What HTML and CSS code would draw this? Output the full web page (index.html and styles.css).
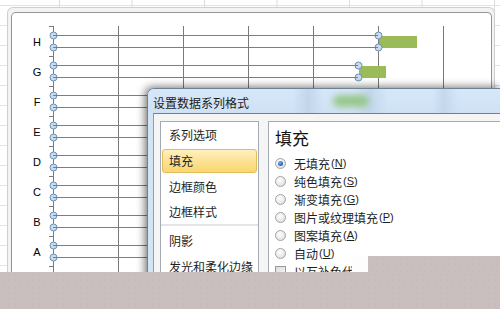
FILE: index.html
```html
<!DOCTYPE html>
<html>
<head>
<meta charset="utf-8">
<link rel="stylesheet" href="styles.css">
</head>
<body>
<div class="sheet">
  <div class="chart-frame">
    <div class="chart-area">
      <svg class="plot" width="479" height="270" viewBox="12 13 479 270" xmlns="http://www.w3.org/2000/svg">
        <g class="grid" stroke="#7a7a7a" stroke-width="1">
          <line x1="118.5" y1="26" x2="118.5" y2="283"/>
          <line x1="183.5" y1="26" x2="183.5" y2="283"/>
          <line x1="248.5" y1="26" x2="248.5" y2="283"/>
          <line x1="313.5" y1="26" x2="313.5" y2="283"/>
          <line x1="378.5" y1="26" x2="378.5" y2="283"/>
          <line x1="443.5" y1="26" x2="443.5" y2="283"/>
        </g>
        <g fill="#9bbb59">
          <rect x="379" y="36" width="38" height="12"/>
          <rect x="359" y="66" width="27" height="12"/>
          <rect x="331" y="96" width="40" height="12"/>
        </g>
        <g class="axis" stroke="#7a7a7a" stroke-width="1">
          <line x1="53.5" y1="26" x2="53.5" y2="283"/>
          <line x1="49" y1="26.5" x2="53" y2="26.5"/>
          <line x1="49" y1="56.5" x2="53" y2="56.5"/>
          <line x1="49" y1="86.5" x2="53" y2="86.5"/>
          <line x1="49" y1="116.5" x2="53" y2="116.5"/>
          <line x1="49" y1="146.5" x2="53" y2="146.5"/>
          <line x1="49" y1="176.5" x2="53" y2="176.5"/>
          <line x1="49" y1="206.5" x2="53" y2="206.5"/>
          <line x1="49" y1="236.5" x2="53" y2="236.5"/>
          <line x1="49" y1="266.5" x2="53" y2="266.5"/>
        </g>
        <g class="markers" fill="#c9dcee" stroke="#6d90b3" stroke-width="1">
          <circle cx="53.5" cy="35.5" r="3.5"/><circle cx="53.5" cy="47.5" r="3.5"/>
          <circle cx="378.5" cy="35.5" r="3.5"/><circle cx="378.5" cy="47.5" r="3.5"/>
          <circle cx="53.5" cy="65.5" r="3.5"/><circle cx="53.5" cy="77.5" r="3.5"/>
          <circle cx="358.5" cy="65.5" r="3.5"/><circle cx="358.5" cy="77.5" r="3.5"/>
          <circle cx="53.5" cy="95.5" r="3.5"/><circle cx="53.5" cy="107.5" r="3.5"/>
          <circle cx="53.5" cy="125.5" r="3.5"/><circle cx="53.5" cy="137.5" r="3.5"/>
          <circle cx="53.5" cy="155.5" r="3.5"/><circle cx="53.5" cy="167.5" r="3.5"/>
          <circle cx="53.5" cy="185.5" r="3.5"/><circle cx="53.5" cy="197.5" r="3.5"/>
          <circle cx="53.5" cy="215.5" r="3.5"/><circle cx="53.5" cy="227.5" r="3.5"/>
          <circle cx="53.5" cy="245.5" r="3.5"/><circle cx="53.5" cy="257.5" r="3.5"/>
        </g>
        <g class="bars" stroke="#7d7d7d" stroke-width="1">
          <line x1="53" y1="35.5" x2="378" y2="35.5"/><line x1="53" y1="47.5" x2="378" y2="47.5"/>
          <line x1="53" y1="65.5" x2="358" y2="65.5"/><line x1="53" y1="77.5" x2="358" y2="77.5"/>
          <line x1="53" y1="95.5" x2="330" y2="95.5"/><line x1="53" y1="107.5" x2="330" y2="107.5"/>
          <line x1="53" y1="125.5" x2="300" y2="125.5"/><line x1="53" y1="137.5" x2="300" y2="137.5"/>
          <line x1="53" y1="155.5" x2="280" y2="155.5"/><line x1="53" y1="167.5" x2="280" y2="167.5"/>
          <line x1="53" y1="185.5" x2="290" y2="185.5"/><line x1="53" y1="197.5" x2="290" y2="197.5"/>
          <line x1="53" y1="215.5" x2="260" y2="215.5"/><line x1="53" y1="227.5" x2="260" y2="227.5"/>
          <line x1="53" y1="245.5" x2="250" y2="245.5"/><line x1="53" y1="257.5" x2="250" y2="257.5"/>
        </g>
        <g class="labels" font-family="Liberation Sans, Arial, sans-serif" font-size="11" fill="#000" text-anchor="middle">
          <text x="37" y="46">H</text>
          <text x="37" y="76">G</text>
          <text x="37" y="106">F</text>
          <text x="37" y="136">E</text>
          <text x="37" y="166">D</text>
          <text x="37" y="196">C</text>
          <text x="37" y="226">B</text>
          <text x="37" y="256">A</text>
        </g>
      </svg>
    </div>
  </div>
</div>

<div class="dialog">
  <div class="titlebar">
    <span class="glow"></span>
    <span class="title">设置数据系列格式</span>
  </div>
  <div class="frame">
    <div class="body">
      <ul class="nav">
        <li>系列选项</li>
        <li class="active">填充</li>
        <li>边框颜色</li>
        <li class="pre-sep">边框样式</li>
        <li class="sep"></li>
        <li>阴影</li>
        <li>发光和柔化边缘</li>
      </ul>
      <div class="pane">
        <h2>填充</h2>
        <ul class="opts">
          <li><span class="radio on"></span>无填充<span class="key">(<u>N</u>)</span></li>
          <li><span class="radio"></span>纯色填充<span class="key">(<u>S</u>)</span></li>
          <li><span class="radio"></span>渐变填充<span class="key">(<u>G</u>)</span></li>
          <li><span class="radio"></span>图片或纹理填充<span class="key">(<u>P</u>)</span></li>
          <li><span class="radio"></span>图案填充<span class="key">(<u>A</u>)</span></li>
          <li><span class="radio"></span>自动<span class="key">(<u>U</u>)</span></li>
          <li><span class="check"></span>以互补色代表负值</li>
        </ul>
      </div>
    </div>
  </div>
</div>

<div class="mask-white"></div>
<div class="band-notch"></div>
<div class="band"></div>
</body>
</html>
```

FILE: styles.css
```css
html, body {
  margin: 0;
  padding: 0;
}
body {
  width: 500px;
  height: 309px;
  overflow: hidden;
  position: relative;
  background-color: #fff;
  font-family: "Noto Sans CJK SC", "Noto Sans", sans-serif;
}
.sheet {
  width: 500px;
  height: 309px;
  padding: 7px 0 0 7px;
  box-sizing: border-box;
  background-image:
    linear-gradient(90deg, #dcdcdc 1px, transparent 1px),
    linear-gradient(#e2e2e2 1px, transparent 1px);
  background-size: 72.5px 100%, 100% 20px;
  background-position: 59px 0, 0 5px;
  overflow: hidden;
}
.chart-frame {
  width: 488px;
  height: 302px;
  box-sizing: border-box;
  border: 1px solid #cfcfcf;
  border-bottom: none;
  border-radius: 6px 6px 0 0;
  background: #f3f3f3;
  padding: 4px 2px 0 3px;
}
.chart-area {
  height: 297px;
  border: 1px solid #959595;
  border-bottom: none;
  border-radius: 5px 5px 0 0;
  background: #fff;
  overflow: hidden;
}
.plot {
  display: block;
}

/* dialog */
.dialog {
  position: absolute;
  left: 147px;
  top: 88px;
  width: 353px;
  height: 221px;
  box-sizing: border-box;
  border: 1px solid #6f8196;
  border-right: none;
  border-bottom: none;
  border-radius: 7px 0 0 0;
  background: linear-gradient(90deg, #d3e4f5 0, #dbe9f7 40%, #cfe1f4 100%);
  box-shadow: -2px -1px 9px rgba(0, 0, 0, 0.55);
  overflow: hidden;
}
.titlebar {
  position: relative;
  height: 24px;
  padding-left: 5px;
  background:
    linear-gradient(90deg,
      rgba(255,255,255,0) 0, rgba(255,255,255,0) 145px,
      rgba(190,210,232,0.8) 160px, rgba(255,255,255,0) 175px,
      rgba(255,255,255,0) 205px, rgba(188,208,230,0.7) 222px, rgba(255,255,255,0) 240px,
      rgba(255,255,255,0) 285px, rgba(190,210,232,0.7) 296px, rgba(255,255,255,0) 310px),
    linear-gradient(#d6e7f8, #cfe2f5);
}
.glow {
  position: absolute;
  left: 185px;
  top: 6px;
  width: 36px;
  height: 12px;
  border-radius: 6px;
  background: #8fc27a;
  filter: blur(3px);
  opacity: 0.85;
}
.title {
  position: relative;
  font-size: 12px;
  line-height: 24px;
  color: #1b1b1b;
}
.frame {
  padding-left: 5px;
}
.body {
  display: flex;
  height: 196px;
  box-sizing: border-box;
  border-top: 1px solid #6e7f93;
  border-left: 1px solid #8d9db0;
  background: #f5f5f5;
  padding: 7px 0 0 6px;
  overflow: hidden;
}
.nav {
  list-style: none;
  margin: 0;
  padding: 1px 0 0 0;
  width: 99px;
  height: 186px;
  box-sizing: border-box;
  border: 1px solid #a4abb4;
  border-bottom: none;
  background: #fff;
  font-size: 12px;
  color: #1e1e1e;
  overflow: hidden;
}
.nav li {
  height: 24px;
  line-height: 24px;
  margin: 0 1px 2px 1px;
  padding-left: 6px;
  border: 1px solid transparent;
  border-width: 0 1px;
  white-space: nowrap;
}
.nav li.active {
  height: 22px;
  line-height: 22px;
  border: 1px solid #e2bc5c;
  border-radius: 3px;
  background: linear-gradient(#fef0bd 0%, #fde39a 45%, #fbd66c 100%);
}
.nav li.pre-sep {
  margin-bottom: 0;
  height: 23px;
  line-height: 22px;
}
.nav li.sep {
  height: 2px;
  margin: 0 0 3px 0;
  padding: 0;
  background: #e4e5e7;
}
.pane {
  flex: 1;
  height: 186px;
  box-sizing: border-box;
  margin-left: 9px;
  border: 1px solid #a4abb4;
  border-right: none;
  border-bottom: none;
  background: #fff;
  padding: 4px 0 0 6px;
  overflow: hidden;
}
.pane h2 {
  margin: 0 0 4px 0;
  font-size: 17px;
  font-weight: normal;
  line-height: 24px;
  color: #111;
}
.opts {
  list-style: none;
  margin: 0;
  padding: 0;
  font-size: 12px;
  color: #1e1e1e;
}
.opts li {
  display: flex;
  align-items: center;
  height: 18px;
  white-space: nowrap;
}
.key {
  font-family: "Liberation Sans", Arial, sans-serif;
  font-size: 11px;
  margin-left: 1px;
}
.radio {
  width: 9px;
  height: 9px;
  border: 1px solid #a3a3a3;
  border-radius: 50%;
  margin: 0 8px 0 0;
  background: radial-gradient(circle at 40% 35%, #ffffff 0, #e8e8e8 60%, #d4d4d4 100%);
  box-sizing: content-box;
  display: flex;
  align-items: center;
  justify-content: center;
}
.radio.on::after {
  content: "";
  width: 5px;
  height: 5px;
  border-radius: 50%;
  background: radial-gradient(circle at 40% 35%, #7fb6ea 0, #2369b8 60%, #134d91 100%);
}
.check {
  width: 9px;
  height: 9px;
  border: 1px solid #9a9a9a;
  margin-right: 8px;
  background: linear-gradient(135deg, #dcdcdc, #f8f8f8);
}

/* cropped band at the bottom of the screenshot */
.band {
  position: absolute;
  left: 0;
  top: 272px;
  width: 500px;
  height: 37px;
  background-color: #c9bfbf;
  background-image: radial-gradient(circle, #c2b7b7 0.6px, transparent 0.8px);
  background-size: 6px 6px;
}
.band-notch {
  position: absolute;
  left: 368px;
  top: 256px;
  width: 132px;
  height: 16px;
  background-color: #c9bfbf;
  background-image: radial-gradient(circle, #c2b7b7 0.6px, transparent 0.8px);
  background-size: 6px 6px;
}
.mask-white {
  position: absolute;
  left: 352px;
  top: 256px;
  width: 16px;
  height: 16px;
  background: #fdfdfd;
}
```
